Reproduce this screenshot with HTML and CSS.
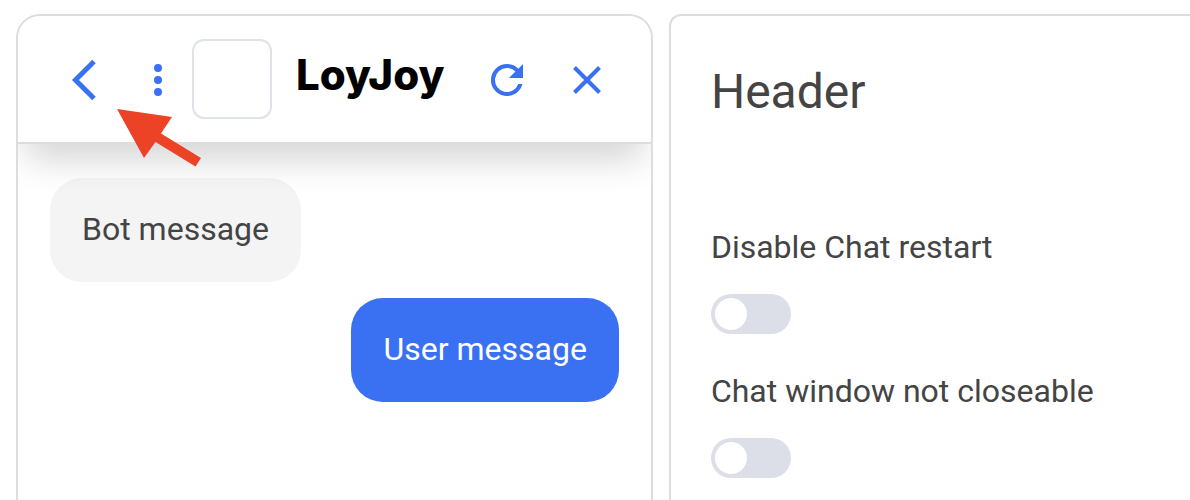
FILE: index.html
```html
<!DOCTYPE html>
<html lang="en">
<head>
<meta charset="utf-8">
<meta name="viewport" content="width=device-width, initial-scale=1">
<title>LoyJoy</title>
<link rel="stylesheet" href="styles.css">
</head>
<body>
<main class="layout">
  <section class="chat" aria-label="Chat preview">
    <header class="chat-header">
      <button class="icon-button" type="button" aria-label="Back">
        <svg width="80" height="78" viewBox="0 0 80 78" fill="none" stroke="currentColor" stroke-width="5"><path d="M52 20.500 33.500 39 52 57.500"/></svg>
      </button>
      <button class="icon-button menu-button" type="button" aria-label="Menu">
        <svg width="8" height="32" viewBox="0 0 8 32" fill="currentColor"><circle cx="4" cy="4" r="4"/><circle cx="4" cy="16" r="4"/><circle cx="4" cy="28" r="4"/></svg>
      </button>
      <div class="avatar"></div>
      <span class="brand">LoyJoy</span>
      <button class="icon-button" type="button" aria-label="Restart">
        <svg width="48" height="48" viewBox="0 0 24 24" fill="currentColor"><path d="M17.65 6.35A7.96 7.96 0 0 0 12 4a8 8 0 1 0 7.73 10h-2.08A6 6 0 1 1 12 6c1.66 0 3.14.69 4.22 1.78L13 11h7V4z"/></svg>
      </button>
      <button class="icon-button" type="button" aria-label="Close">
        <svg width="28" height="28" viewBox="0 0 28 28" fill="none" stroke="currentColor" stroke-width="4"><path d="M1.500 1.500 26.500 26.500M26.500 1.500 1.500 26.500"/></svg>
      </button>
    </header>
    <svg class="pointer" width="84" height="58" viewBox="0 0 84 58" fill="currentColor" aria-hidden="true"><path d="M0 0 55 8 44 24.500 84 49 78.500 57.500 38.500 33 27 49z"/></svg>
    <div class="messages">
      <p class="bubble bubble-bot">Bot message</p>
      <p class="bubble bubble-user">User message</p>
    </div>
  </section>
  <section class="settings">
    <h2 class="settings-title">Header</h2>
    <div class="field">
      <label for="restart">Disable Chat restart</label>
      <input class="toggle" id="restart" type="checkbox" role="switch">
    </div>
    <div class="field">
      <label for="closeable">Chat window not closeable</label>
      <input class="toggle" id="closeable" type="checkbox" role="switch">
    </div>
  </section>
</main>
</body>
</html>
```
FILE: styles.css
```css
* {
  box-sizing: border-box;
}

body {
  margin: 0;
  background: #fff;
  color: #444;
  font: 32px/40px Roboto, "Liberation Sans", sans-serif;
}

.layout {
  display: grid;
  grid-template-columns: 11fr 9fr;
  gap: 16px;
  min-height: 100vh;
  padding: 14px 0 0 16px;
}

.chat {
  position: relative;
  overflow: hidden;
  border: 2px solid #ddd;
  border-bottom: 0;
  border-radius: 24px 24px 0 0;
}

.chat-header {
  position: relative;
  z-index: 1;
  display: flex;
  align-items: center;
  min-height: 128px;
  padding: 0 24px;
  border-bottom: 2px solid #ddd;
  background: #fff;
  box-shadow: 0 24px 32px -8px rgba(0, 0, 0, 0.16);
}

.icon-button {
  display: flex;
  align-items: center;
  justify-content: center;
  width: 80px;
  height: 80px;
  padding: 2px 0 0;
  border: 0;
  background: none;
  color: #3971f2;
  cursor: pointer;
}

.menu-button {
  width: 70px;
  padding-left: 2px;
}

.avatar {
  width: 80px;
  height: 80px;
  border: 2px solid #dfe2e8;
  border-radius: 12px;
}

.brand {
  flex: 1;
  padding: 0 0 8px 24px;
  color: #000;
  font: 800 42px/48px Inter, sans-serif;
}

.pointer {
  position: absolute;
  z-index: 2;
  top: 93px;
  left: 99px;
  color: #ec4226;
}

.messages {
  display: flex;
  flex-direction: column;
  gap: 16px;
  padding: 34px 32px;
}

.bubble {
  margin: 0;
  padding: 31px 32px 33px;
  border-radius: 32px;
}

.bubble-bot {
  align-self: flex-start;
  background: #f4f4f4;
}

.bubble-user {
  align-self: flex-end;
  background: #3971f2;
  color: #fff;
}

.settings {
  padding: 48px 40px 0;
  border: 2px solid #ddd;
  border-width: 2px 0 0 2px;
  border-radius: 12px 0 0;
}

.settings-title {
  margin: 0 0 107px;
  font-size: 48px;
  font-weight: 400;
  line-height: 56px;
}

.field {
  display: flex;
  flex-direction: column;
  align-items: flex-start;
  gap: 27px;
}

.field + .field {
  margin-top: 37px;
}

.toggle {
  appearance: none;
  width: 80px;
  height: 40px;
  margin: 0;
  padding: 4px;
  border-radius: 20px;
  background: #dcdfe7;
  cursor: pointer;
}

.toggle::before {
  content: "";
  display: block;
  width: 32px;
  height: 32px;
  border-radius: 50%;
  background: #fff;
}

.toggle:checked {
  background: #3971f2;
}

.toggle:checked::before {
  margin-left: auto;
}
```
